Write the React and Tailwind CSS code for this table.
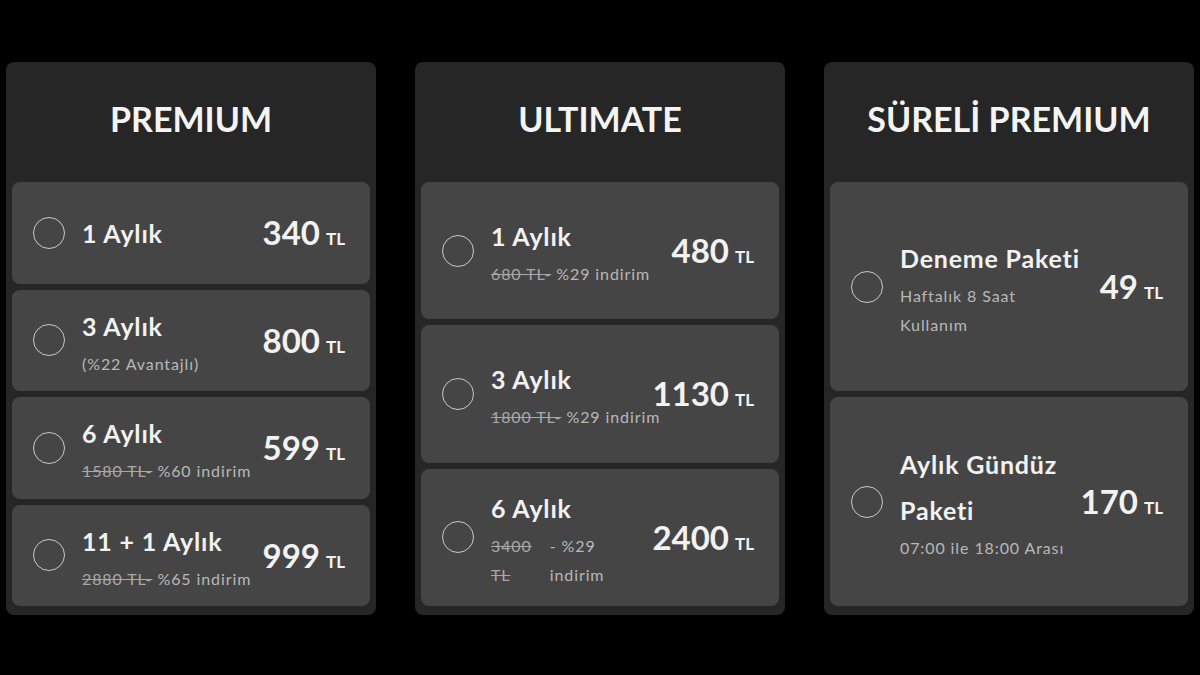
import React from "react";

const font = { fontFamily: "Lato, 'Noto Sans', sans-serif" };

function Radio() {
  return (
    <div className="w-[32px] h-[32px] shrink-0 rounded-full border-[1.5px] border-[#c8c8c8]" />
  );
}

function Price({ value }) {
  return (
    <div className="shrink-0 flex items-baseline gap-[6px] text-[#f2f2f2]">
      <span className="text-[33px] font-bold leading-none">{value}</span>
      <span className="text-[17px] font-bold leading-none">TL</span>
    </div>
  );
}

function Row({ children, price }) {
  return (
    <div className="flex-1 rounded-[8px] bg-[#454545] flex items-center pl-[21px] pr-[25px]">
      <Radio />
      <div className="flex-1 min-w-0 pl-[17px]">{children}</div>
      <Price value={price} />
    </div>
  );
}

function Title({ children }) {
  return (
    <div className="text-[25px] font-bold leading-[46px] tracking-[0.8px] text-[#f2f2f2] whitespace-nowrap">
      {children}
    </div>
  );
}

function Sub({ children }) {
  return (
    <div className="text-[16px] leading-[29px] tracking-[0.9px] text-[#b8b8b8] whitespace-nowrap">
      {children}
    </div>
  );
}

function Strike({ children }) {
  return <span className="line-through text-[#a8a8a8]">{children}</span>;
}

function Panel({ title, children }) {
  return (
    <div className="w-[370px] h-[553px] shrink-0 rounded-[8px] bg-[#262626] flex flex-col">
      <div className="h-[120px] shrink-0 flex items-center justify-center pb-[8px]">
        <h2 className="text-[34px] font-bold text-[#f4f4f4]">{title}</h2>
      </div>
      <div className="flex-1 flex flex-col gap-[6px] px-[6px] pb-[9px]">{children}</div>
    </div>
  );
}

export default function App() {
  return (
    <div className="w-[1200px] h-[675px] bg-black overflow-hidden" style={font}>
      <div className="flex gap-[39px] pl-[6px] pt-[62px]">
        <Panel title="PREMIUM">
          <Row price="340">
            <Title>1 Aylık</Title>
          </Row>
          <Row price="800">
            <Title>3 Aylık</Title>
            <Sub>(%22 Avantajlı)</Sub>
          </Row>
          <Row price="599">
            <Title>6 Aylık</Title>
            <Sub>
              <Strike>1580 TL-</Strike> %60 indirim
            </Sub>
          </Row>
          <Row price="999">
            <Title>11 + 1 Aylık</Title>
            <Sub>
              <Strike>2880 TL-</Strike> %65 indirim
            </Sub>
          </Row>
        </Panel>

        <Panel title="ULTIMATE">
          <Row price="480">
            <Title>1 Aylık</Title>
            <Sub>
              <Strike>680 TL-</Strike> %29 indirim
            </Sub>
          </Row>
          <Row price="1130">
            <Title>3 Aylık</Title>
            <Sub>
              <Strike>1800 TL-</Strike> %29 indirim
            </Sub>
          </Row>
          <Row price="2400">
            <Title>6 Aylık</Title>
            <div className="flex gap-[18px]">
              <Sub>
                <Strike>3400</Strike>
                <br />
                <Strike>TL</Strike>
              </Sub>
              <Sub>
                - %29
                <br />
                indirim
              </Sub>
            </div>
          </Row>
        </Panel>

        <Panel title="SÜRELİ PREMIUM">
          <Row price="49">
            <Title>Deneme Paketi</Title>
            <Sub>
              Haftalık 8 Saat
              <br />
              Kullanım
            </Sub>
          </Row>
          <Row price="170">
            <Title>
              Aylık Gündüz
              <br />
              Paketi
            </Title>
            <Sub>07:00 ile 18:00 Arası</Sub>
          </Row>
        </Panel>
      </div>
    </div>
  );
}
